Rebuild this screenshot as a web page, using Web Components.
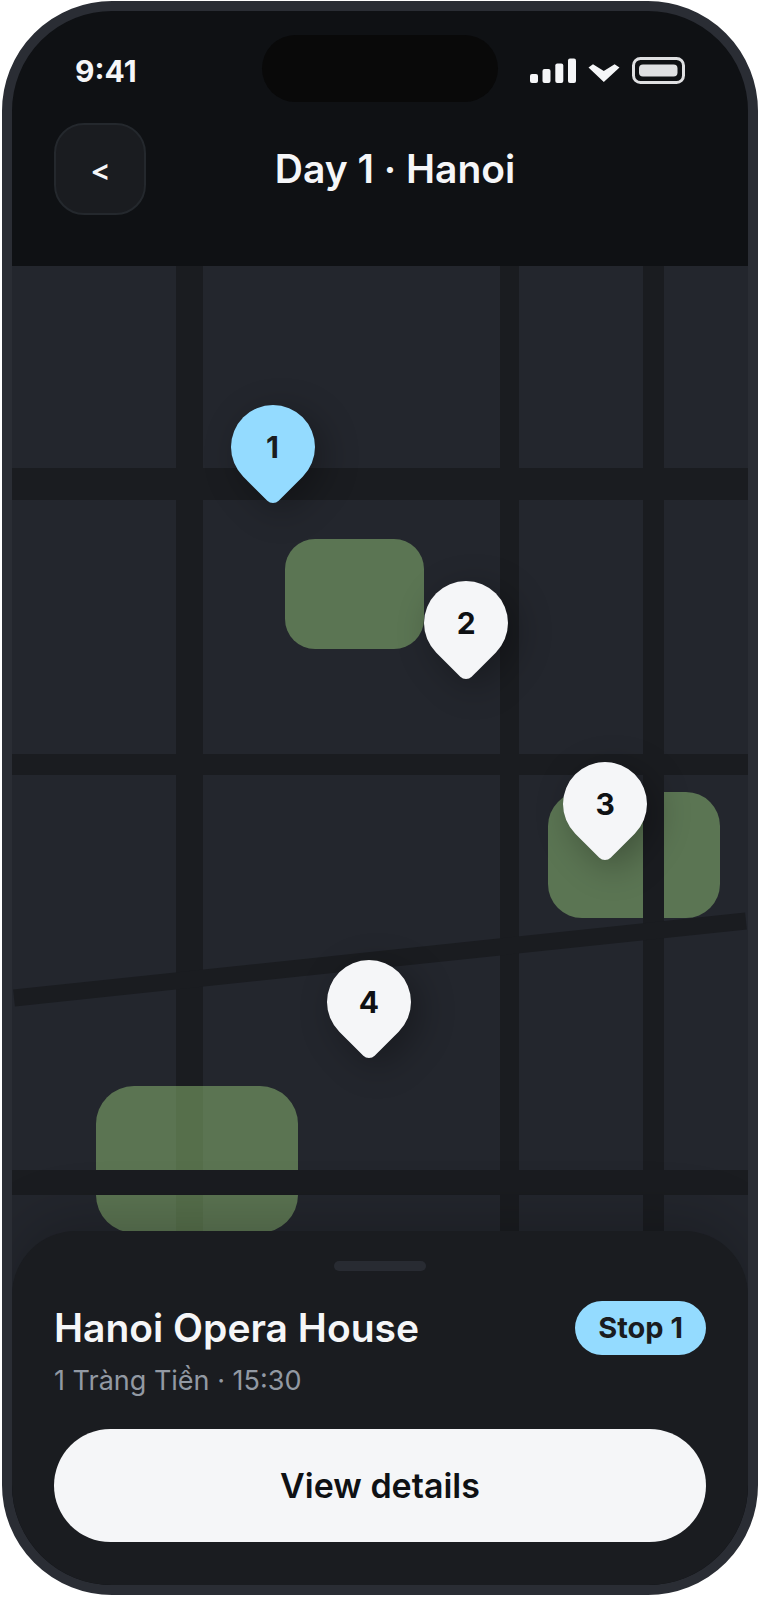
<!DOCTYPE html>
<html lang="en">
<head>
<meta charset="utf-8">
<meta name="viewport" content="width=device-width, initial-scale=1">
<title>Day 1 · Hanoi</title>
<style>
  body {
    margin: 0;
    background: #fff;
    font-family: Inter, "Open Sans", sans-serif;
    --ink: #0f1114;
    --surface: #1a1c20;
    --land: #23262d;
    --line: #2a2d34;
    --light: #f5f6f8;
    --muted: #9299a3;
    --accent: #94dbff;
  }
</style>
</head>
<body>
<trip-day></trip-day>

<script>
const define = (name, html) => {
  const template = document.createElement('template');
  template.innerHTML = html;
  customElements.define(name, class extends HTMLElement {
    constructor() {
      super();
      this.attachShadow({ mode: 'open' }).append(template.content.cloneNode(true));
    }
  });
};

define('status-bar', `
  <style>
    :host {
      display: grid;
      grid-template-columns: 1fr 236px 1fr;
      align-items: center;
      height: 67px;
      padding: 0 63px;
      color: var(--light);
    }
    time { font-size: 30px; line-height: 36px; font-weight: 700; padding-top: 4px; }
    .island { height: 67px; border-radius: 34px; background: #090909; }
    .icons { display: flex; align-items: center; justify-content: flex-end; gap: 12px; padding-top: 4px; }
    svg { display: block; flex: none; }
  </style>
  <time>9:41</time>
  <div class="island"></div>
  <div class="icons">
    <svg width="46" height="26" viewBox="0 0 46 26" fill="currentColor" aria-hidden="true">
      <rect x="0" y="16" width="8" height="9" rx="2"/>
      <rect x="12.5" y="11" width="8" height="14" rx="2"/>
      <rect x="25.3" y="5.5" width="8" height="19.5" rx="2"/>
      <rect x="38" y="0.5" width="8" height="24.5" rx="2"/>
    </svg>
    <svg width="32" height="26" viewBox="0 0 32 26" fill="currentColor" aria-hidden="true">
      <path d="M0.5 9.5 5 6.2 15.8 13 26.6 6.2 31.5 9.5 15.8 24Z"/>
    </svg>
    <svg width="53" height="27" viewBox="0 0 53 27" aria-hidden="true">
      <rect x="1.5" y="1.5" width="50" height="24" rx="7" fill="none" stroke="#dfe0e2" stroke-width="3"/>
      <rect x="7" y="7.5" width="38.5" height="12" rx="4" fill="#dfe0e2"/>
    </svg>
  </div>
`);

define('day-header', `
  <style>
    :host {
      display: grid;
      grid-template-columns: 92px 1fr 62px;
      align-items: center;
      padding: 21px 42px 51px;
      color: var(--light);
    }
    button {
      box-sizing: border-box;
      width: 92px;
      height: 92px;
      padding: 6px 0 0;
      border: 2px solid #24282d;
      border-radius: 30px;
      background: var(--surface);
      color: inherit;
      font: 700 30px/36px "Open Sans", sans-serif;
    }
    h1 { margin: 0; text-align: center; font-size: 39px; line-height: 54px; font-weight: 600; }
  </style>
  <button type="button" aria-label="Back">&lt;</button>
  <h1><slot></slot></h1>
`);

define('map-pin', `
  <style>
    :host {
      position: absolute;
      display: grid;
      place-items: center;
      width: 84px;
      height: 84px;
      margin-left: -42px;
      color: var(--ink);
      --fill: var(--light);
    }
    :host([active]) { --fill: var(--accent); color: var(--surface); }
    .drop, span { grid-area: 1 / 1; }
    .drop {
      width: 84px;
      height: 84px;
      border-radius: 50% 50% 50% 8px;
      background: var(--fill);
      box-shadow: 0 12px 36px rgb(0 0 0 / .3);
      transform: rotate(-45deg);
    }
    span { position: relative; font-size: 30px; line-height: 36px; font-weight: 700; }
  </style>
  <div class="drop"></div>
  <span><slot></slot></span>
`);

define('city-map', `
  <style>
    :host {
      position: relative;
      display: block;
      flex: 1 0 1029px;
      overflow: hidden;
      background: var(--land);
    }
    .road, .park { position: absolute; }
    .road { background: var(--surface); }
    .across { left: 0; right: 0; }
    .down { top: 0; bottom: 0; }
    .park { background: #5b7553; }
    .over { background: rgb(160 213 129 / .45); }
  </style>
  <div class="park" style="left:37.1%; top:273px; width:18.9%; height:110px; border-radius:30px"></div>
  <div class="park" style="left:72.8%; top:526px; width:23.4%; height:126px; border-radius:34px"></div>
  <div class="road down" style="left:22.3%; width:27px"></div>
  <div class="park over" style="left:11.4%; top:820px; width:27.4%; height:147px; border-radius:38px"></div>
  <div class="road across" style="top:202px; height:32px"></div>
  <div class="road across" style="top:488px; height:21px"></div>
  <div class="road across" style="top:904px; height:25px"></div>
  <div class="road down" style="left:66.3%; width:19px"></div>
  <div class="road down" style="left:85.7%; width:21px"></div>
  <div class="road across" style="top:685px; height:17px; transform:rotate(-6deg)"></div>
  <slot></slot>
`);

define('stop-sheet', `
  <style>
    :host {
      position: relative;
      display: grid;
      margin-top: -64px;
      padding: 30px 42px 43px;
      border-radius: 64px 64px 0 0;
      background: var(--surface);
      box-shadow: 0 -12px 60px rgb(0 0 0 / .2);
      color: var(--light);
    }
    .handle { justify-self: center; width: 92px; height: 10px; border-radius: 5px; background: #282b32; }
    .row { display: flex; align-items: center; justify-content: space-between; margin-top: 30px; }
    h2 { margin: 0; font-size: 39px; line-height: 54px; font-weight: 600; }
    .chip {
      padding: 0 23px;
      border-radius: 27px;
      background: var(--accent);
      color: var(--surface);
      font-size: 29px;
      line-height: 54px;
      font-weight: 700;
    }
    p { margin: 8px 0 0; color: var(--muted); font-size: 27px; line-height: 36px; }
    button {
      height: 113px;
      margin-top: 30px;
      padding: 0;
      border: 0;
      border-radius: 57px;
      background: var(--light);
      color: var(--ink);
      font: inherit;
      font-size: 34px;
      font-weight: 600;
    }
  </style>
  <div class="handle"></div>
  <div class="row">
    <h2><slot name="name"></slot></h2>
    <span class="chip"><slot name="stop"></slot></span>
  </div>
  <p><slot name="place"></slot></p>
  <button type="button">View details</button>
`);

define('trip-day', `
  <style>
    :host { display: block; padding: 1px 2px 2px; }
    main {
      box-sizing: border-box;
      display: flex;
      flex-direction: column;
      min-height: calc(100vh - 3px);
      padding-top: 24px;
      overflow: hidden;
      border: 10px solid var(--line);
      border-radius: 110px;
      background: var(--ink);
    }
  </style>
  <main>
    <status-bar></status-bar>
    <day-header>Day 1 · Hanoi</day-header>
    <city-map>
      <map-pin active style="left:35.4%; top:139px">1</map-pin>
      <map-pin style="left:61.7%; top:315px">2</map-pin>
      <map-pin style="left:80.6%; top:496px">3</map-pin>
      <map-pin style="left:48.5%; top:694px">4</map-pin>
    </city-map>
    <stop-sheet>
      <span slot="name">Hanoi Opera House</span>
      <span slot="stop">Stop 1</span>
      <span slot="place">1 Tràng Tiền · 15:30</span>
    </stop-sheet>
  </main>
`);
</script>
</body>
</html>
